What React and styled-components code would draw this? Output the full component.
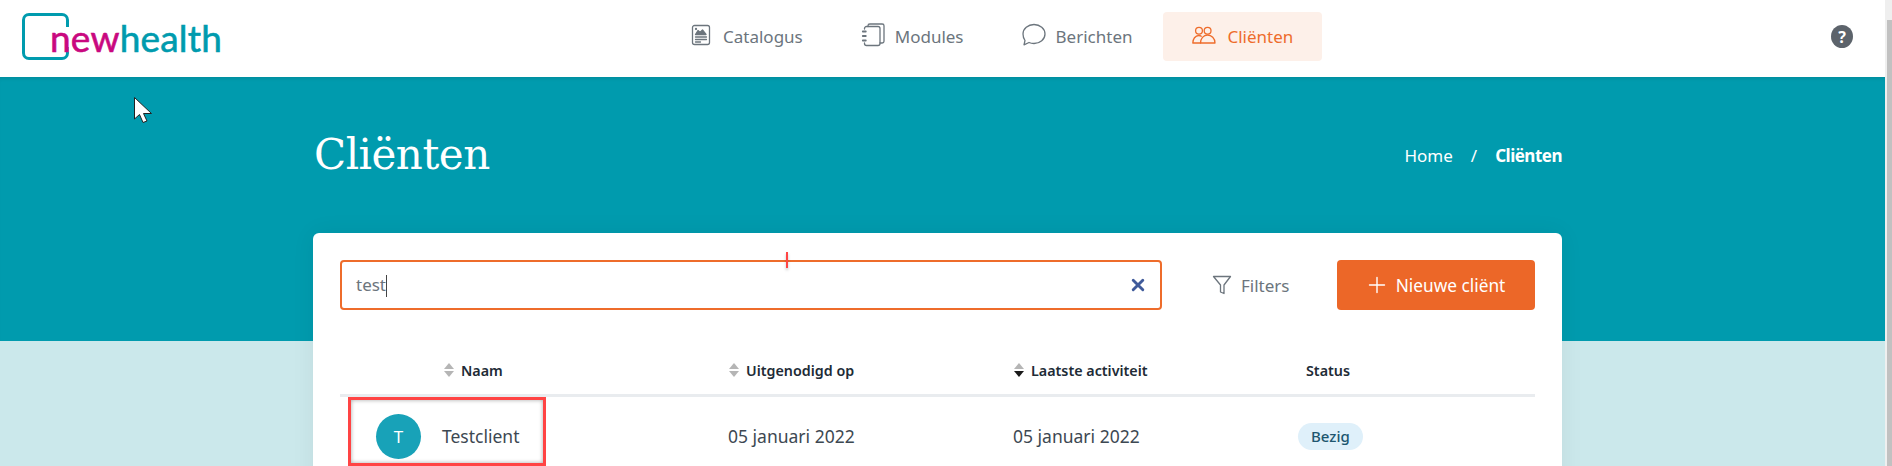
import styled, { createGlobalStyle } from 'styled-components'

const Global = createGlobalStyle`
  html, body {
    margin: 0;
    padding: 0;
    height: 466px;
    overflow: hidden;
    background: #cbe8eb;
    font-family: "Noto Sans", "Liberation Sans", sans-serif;
  }
  * { box-sizing: border-box; }
`

const Page = styled.div`
  display: flex;
  width: 1892px;
  height: 466px;
  overflow: hidden;
`
const Main = styled.div`
  flex: 1;
  min-width: 0;
  display: flex;
  flex-direction: column;
  position: relative;
`
const Scrollbar = styled.div`
  width: 7px;
  background: #efefef;
  padding: 20px 0 0 2px;
  display: flex;
`
const Thumb = styled.div`
  width: 100%;
  background: #c1c1c1;
`

const Header = styled.header`
  flex: none;
  height: 77px;
  background: #fff;
  display: flex;
  align-items: center;
  padding: 0 32px 4px 22px;
`
const Logo = styled.div`
  position: relative;
  width: 198px;
  height: 47px;
  display: flex;
  align-items: center;
  padding-left: 28px;
`
const LogoBox = styled.div`
  position: absolute;
  left: 0;
  top: 0;
  width: 47px;
  height: 47px;
  border: 3px solid #009bae;
  border-radius: 7px;

  &::after {
    content: '';
    position: absolute;
    right: -3px;
    top: 11px;
    width: 3px;
    height: 20px;
    background: #fff;
  }
`
const LogoText = styled.span`
  position: relative;
  top: 1px;
  font-family: "Lato", sans-serif;
  font-size: 37px;
  letter-spacing: 0.2px;
  -webkit-text-stroke: 0.6px currentColor;
  color: #009bae;
  line-height: 1;
`
const LogoPink = styled.span`
  color: #c9087f;
`
const Nav = styled.nav`
  display: flex;
  align-items: center;
  margin-left: 440px;
`
const NavItem = styled.a`
  display: flex;
  align-items: center;
  gap: ${p => (p.$active ? '11px' : '10px')};
  height: 49px;
  margin-left: ${p => (p.$active ? '2px' : '0')};
  padding: 0 29px;
  border-radius: 4px;
  font-size: 17px;
  color: ${p => (p.$active ? '#ee6c2b' : '#6c757d')};
  background: ${p => (p.$active ? '#fdf0e9' : 'transparent')};
`
const NavIcon = styled.svg`
  width: 24px;
  height: 24px;
  margin-top: -4px;
  fill: none;
  stroke: currentColor;
  stroke-width: 1.3;
  stroke-linecap: round;
  stroke-linejoin: round;
`
const Help = styled.div`
  margin-left: auto;
  width: 22px;
  height: 23px;
  border-radius: 50%;
  background: #5c636b;
  color: #fff;
  font-size: 16px;
  font-weight: 700;
  display: flex;
  align-items: center;
  justify-content: center;
`

const Hero = styled.section`
  flex: none;
  height: 264px;
  background: #009bae;
  box-shadow: inset 0 4px 4px -3px rgba(0, 0, 0, 0.12);
  padding: 50px 323px 0 314px;
`
const HeroRow = styled.div`
  display: flex;
  justify-content: space-between;
  align-items: center;
`
const Title = styled.h1`
  margin: 0;
  font-family: "DejaVu Serif", serif;
  font-weight: 400;
  font-size: 42px;
  letter-spacing: -0.5px;
  line-height: 56px;
  color: #fff;
`
const Crumbs = styled.div`
  display: flex;
  gap: 18px;
  font-size: 17px;
  color: #fff;
`
const CrumbStrong = styled.span`
  font-weight: 700;
  letter-spacing: -0.5px;
`

const Card = styled.section`
  flex: none;
  position: relative;
  margin: -108px 0 0 313px;
  width: 1249px;
  height: 260px;
  background: #fff;
  border-radius: 6px;
  padding: 27px 27px 0;
  box-shadow: 0 0 24px rgba(0, 0, 0, 0.06);
`
const Toolbar = styled.div`
  display: flex;
  align-items: center;
`
const Search = styled.div`
  width: 822px;
  height: 50px;
  border: 2px solid #ee6c2b;
  border-radius: 4px;
  display: flex;
  align-items: center;
  justify-content: space-between;
  padding: 0 14px;
  font-size: 17px;
  color: #6c757d;
`
const Caret = styled.span`
  display: inline-block;
  width: 1px;
  height: 22px;
  background: #444;
  vertical-align: middle;
`
const Filters = styled.div`
  display: flex;
  align-items: center;
  gap: 9px;
  margin-left: 50px;
  font-size: 17px;
  color: #6c757d;
`
const AddButton = styled.div`
  margin-left: auto;
  width: 198px;
  height: 50px;
  border-radius: 4px;
  background: #ec6728;
  color: #fff;
  font-size: 17.3px;
  display: flex;
  align-items: center;
  justify-content: center;
  gap: 9px;
`
const Table = styled.div`
  margin-top: 36px;
`
const Row = styled.div`
  display: grid;
  grid-template-columns: 283px 286px 286px 1fr;
  align-items: center;
  height: ${p => (p.$head ? '51px' : '78px')};
  border-bottom: ${p => (p.$head ? '3px solid #e9ecef' : 'none')};
`
const HeadCell = styled.div`
  display: flex;
  align-items: center;
  gap: 6px;
  padding-left: ${p => p.$pad}px;
  font-size: 14.3px;
  font-weight: 600;
  color: #212b36;
`
const Cell = styled.div`
  font-size: 17.5px;
  color: #3d4852;
  padding-left: ${p => p.$pad}px;
`
const ClientCell = styled.div`
  display: flex;
  align-items: center;
  gap: 21px;
  padding-left: 36px;
  font-size: 17.5px;
  color: #3d4852;
`
const Avatar = styled.div`
  width: 45px;
  height: 45px;
  border-radius: 50%;
  background: #18a2b8;
  color: #fff;
  font-size: 17px;
  display: flex;
  align-items: center;
  justify-content: center;
`
const Badge = styled.span`
  display: inline-flex;
  align-items: center;
  height: 27px;
  padding: 0 13px;
  border-radius: 14px;
  background: #dff0fa;
  color: #20566f;
  font-size: 15px;
  font-weight: 500;
`
// annotations drawn over the screenshot
const RedBox = styled.div`
  position: absolute;
  left: 348px;
  top: 397px;
  width: 198px;
  height: 69px;
  border: 3px solid #f44;
  box-shadow: inset 0 0 4px rgba(0, 0, 0, 0.35);
`
const RedTick = styled.div`
  position: absolute;
  left: 786px;
  top: 252px;
  width: 2px;
  height: 16px;
  background: #f44;
  box-shadow: 0 2px 3px rgba(0, 0, 0, 0.25);
`
const Cursor = styled.svg`
  position: absolute;
  left: 134px;
  top: 97px;
`

const Icon = ({ size = 20, children, color = 'currentColor', sw = 1.3 }) => (
  <svg width={size} height={size} viewBox='0 0 20 20' fill='none' stroke={color} strokeWidth={sw} strokeLinecap='round' strokeLinejoin='round'>
    {children}
  </svg>
)

const SortIcon = ({ down }) => (
  <svg width='12' height='16' viewBox='0 0 12 16'>
    <path d='M6 1 L11 7 H1 Z' fill='#b5b5b5' />
    <path d='M6 15 L11 9 H1 Z' fill={down ? '#1a1a1a' : '#b5b5b5'} />
  </svg>
)

const Sort = ({ label, down }) => (
  <>
    <SortIcon down={down} />
    {label}
  </>
)

export default function App () {
  return (
    <Page>
      <Global />
      <Main>
        <Header>
          <Logo>
            <LogoBox />
            <LogoText><LogoPink>new</LogoPink>health</LogoText>
          </Logo>
          <Nav>
            <NavItem>
              <NavIcon viewBox='0 0 24 24'>
                <rect x='3.5' y='2.5' width='17' height='19' rx='2' />
                <circle cx='7' cy='6' r='.5' />
                <path d='M6.500 11.500l2.500-4 2 2 2.500-2.500 3.500 4.500z' fill='currentColor' />
                <path d='M6.500 14h11M6.500 16.500h11M6.500 19h5' />
              </NavIcon>
              Catalogus
            </NavItem>
            <NavItem>
              <NavIcon viewBox='0 0 24 24'>
                <path d='M3.500 6V5.500a2 2 0 0 1 2-2H17a2 2 0 0 1 2 2v15a2 2 0 0 1-2 2H5.500a2 2 0 0 1-2-2V20' />
                <path d='M7 3.500V2.800A1.800 1.800 0 0 1 8.800 1h12.400A1.800 1.800 0 0 1 23 2.800v15.400a1.800 1.800 0 0 1-1.800 1.800H19' />
                <path d='M1.800 8.500h3M1.800 13h3M1.800 17.500h3' strokeWidth='1.800' />
              </NavIcon>
              Modules
            </NavItem>
            <NavItem>
              <NavIcon viewBox='0 0 24 24'>
                <path d='M12 1.500c6 0 11 4.200 11 9.500s-5 9.500-11 9.500c-1.800 0-3.500-.3-5-1L2 21.800l1-4.300C1.800 15.800 1 13.500 1 11 1 5.700 6 1.500 12 1.500z' />
              </NavIcon>
              Berichten
            </NavItem>
            <NavItem $active>
              <NavIcon viewBox='0 0 24 24'>
                <circle cx='7' cy='7.800' r='3.400' />
                <circle cx='15.600' cy='7.800' r='3.400' />
                <path d='M8.500 20c0-4.500 3-8 7-8s7.500 3.500 7.500 8z' />
                <path d='M.8 20c0-4 2.500-7.500 6-7.500 1 0 1.800.2 2.500.7M.8 20h7.700' />
              </NavIcon>
              Cliënten
            </NavItem>
          </Nav>
          <Help>?</Help>
        </Header>
        <Hero>
          <HeroRow>
            <Title>Cliënten</Title>
            <Crumbs>
              <span>Home</span>
              <span>/</span>
              <CrumbStrong>Cliënten</CrumbStrong>
            </Crumbs>
          </HeroRow>
        </Hero>
        <Card>
          <Toolbar>
            <Search>
              <span>test<Caret /></span>
              <Icon size={16} color='#3f5a9a' sw={3.600}>
                <path d='M4 4l12 12M16 4L4 16' />
              </Icon>
            </Search>
            <Filters>
              <Icon>
                <path d='M1.500 1.500h17L12 10v8.500l-3.500-1.500v-7z' />
              </Icon>
              Filters
            </Filters>
            <AddButton>
              <Icon sw={1.400}>
                <path d='M10 2.500v15M2.500 10h15' />
              </Icon>
              Nieuwe cliënt
            </AddButton>
          </Toolbar>
          <Table>
            <Row $head>
              <HeadCell $pad={103}><Sort label='Naam' /></HeadCell>
              <HeadCell $pad={105}><Sort label='Uitgenodigd op' /></HeadCell>
              <HeadCell $pad={104}><Sort label='Laatste activiteit' down /></HeadCell>
              <HeadCell $pad={111}>Status</HeadCell>
            </Row>
            <Row>
              <ClientCell>
                <Avatar>T</Avatar>
                Testclient
              </ClientCell>
              <Cell $pad={105}>05 januari 2022</Cell>
              <Cell $pad={104}>05 januari 2022</Cell>
              <Cell $pad={103}><Badge>Bezig</Badge></Cell>
            </Row>
          </Table>
        </Card>
        <RedBox />
        <RedTick />
        <Cursor width='20' height='28' viewBox='0 0 20 28'>
          <path d='M.5.5V22l5-4.500 3.500 8 4-1.500-3.500-7.500h8z' fill='#fff' stroke='#222' strokeWidth='1' />
        </Cursor>
      </Main>
      <Scrollbar><Thumb /></Scrollbar>
    </Page>
  )
}
